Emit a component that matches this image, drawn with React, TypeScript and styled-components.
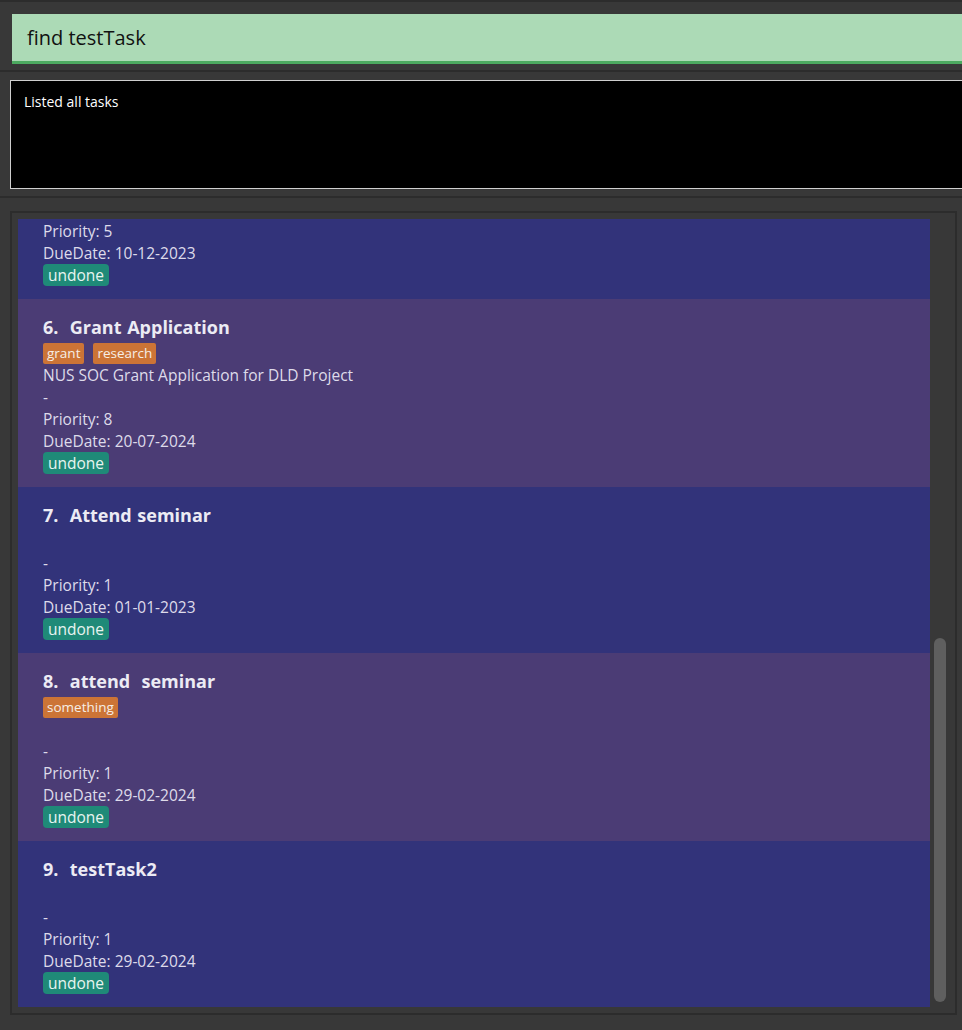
import React, { useLayoutEffect, useRef } from "react";
import styled, { createGlobalStyle } from "styled-components";

const GlobalStyle = createGlobalStyle`
  html, body {
    margin: 0;
    padding: 0;
    background: #383838;
    overflow: hidden;
  }
  body {
    font-family: "Open Sans", "Noto Sans", sans-serif;
  }
`;

const Window = styled.div`
  width: 962px;
  height: 1030px;
  display: flex;
  flex-direction: column;
  background: #383838;
  overflow: hidden;
`;

const Section = styled.div<{ $pad: string }>`
  border-top: 2px solid #2c2c2c;
  padding: ${(p) => p.$pad};
  display: flex;
  flex-direction: column;
`;

const CommandField = styled.div`
  height: 47px;
  background: #acdab6;
  border-bottom: 3px solid #4caa60;
  display: flex;
  align-items: center;
  padding-left: 15px;
  font-size: 20px;
  color: #111;
`;

const ResultBox = styled.div`
  background: #000;
  border: 1px solid #cfcfcf;
  border-right: none;
  padding: 11px 13px;
  font-size: 14px;
  color: #fff;
  box-sizing: border-box;
  height: 109px;
`;

const ListPanel = styled.div`
  height: 804px;
  box-sizing: border-box;
  border: 2px solid #2c2c2c;
  padding: 6px;
  display: flex;
`;

const Viewport = styled.div`
  flex: 1;
  overflow: hidden;
  display: flex;
  flex-direction: column;
`;

const Card = styled.div<{ $odd: boolean }>`
  flex: none;
  background: ${(p) => (p.$odd ? "#4b3c75" : "#32337a")};
  padding: 15px 25px 13px;
  display: flex;
  flex-direction: column;
  color: #dedbea;
`;

const Title = styled.div`
  height: 26px;
  line-height: 26px;
  font-size: 18px;
  font-weight: 700;
  color: #ecebf4;
  white-space: pre;
  word-spacing: 1px;
  margin-bottom: 2px;
`;

const TagRow = styled.div`
  display: flex;
  gap: 9px;
  padding-top: 1px;
`;

const Tag = styled.span`
  height: 21px;
  line-height: 21px;
  padding: 0 4px;
  background: #cc7436;
  color: #f6eee6;
  font-size: 13.5px;
  border-radius: 2px;
`;

const Line = styled.div`
  height: 22px;
  line-height: 22px;
  font-size: 15.5px;
  white-space: pre;
`;

const Badge = styled.span`
  align-self: flex-start;
  height: 22px;
  line-height: 22px;
  padding: 0 5px;
  background: #1f8a78;
  color: #e8f4f0;
  font-size: 15.5px;
  border-radius: 4px;
`;

const Track = styled.div`
  width: 19px;
  display: flex;
  flex-direction: column;
  justify-content: flex-end;
  padding-bottom: 5px;
  box-sizing: border-box;
`;

const Thumb = styled.div`
  margin-left: 4px;
  width: 12px;
  height: 364px;
  border-radius: 6px;
  background: #5f5f5f;
`;

type Task = {
  n: number;
  title: string;
  tags: string[];
  desc: string;
  priority: number;
  due: string;
};

const tasks: Task[] = [
  { n: 5, title: "testTask", tags: [], desc: "", priority: 5, due: "10-12-2023" },
  {
    n: 6,
    title: "Grant Application",
    tags: ["grant", "research"],
    desc: "NUS SOC Grant Application for DLD Project",
    priority: 8,
    due: "20-07-2024",
  },
  { n: 7, title: "Attend seminar", tags: [], desc: "", priority: 1, due: "01-01-2023" },
  { n: 8, title: "attend  seminar", tags: ["something"], desc: "", priority: 1, due: "29-02-2024" },
  { n: 9, title: "testTask2", tags: [], desc: "", priority: 1, due: "29-02-2024" },
];

export default function App() {
  const ref = useRef<HTMLDivElement>(null);
  useLayoutEffect(() => {
    if (ref.current) ref.current.scrollTop = ref.current.scrollHeight;
  }, []);
  return (
    <Window>
      <GlobalStyle />
      <Section $pad="12px 0 6px 12px">
        <CommandField>find testTask</CommandField>
      </Section>
      <Section $pad="8px 0 7px 10px">
        <ResultBox>Listed all tasks</ResultBox>
      </Section>
      <Section $pad="13px 5px 0 10px">
        <ListPanel>
          <Viewport ref={ref}>
            {tasks.map((t) => (
              <Card key={t.n} $odd={t.n % 2 === 0}>
                <Title>{`${t.n}.  ${t.title}`}</Title>
                {t.tags.length > 0 && (
                  <TagRow>
                    {t.tags.map((g) => (
                      <Tag key={g}>{g}</Tag>
                    ))}
                  </TagRow>
                )}
                <Line>{t.desc}</Line>
                <Line>-</Line>
                <Line>Priority: {t.priority}</Line>
                <Line>DueDate: {t.due}</Line>
                <Badge>undone</Badge>
              </Card>
            ))}
          </Viewport>
          <Track>
            <Thumb />
          </Track>
        </ListPanel>
      </Section>
    </Window>
  );
}
